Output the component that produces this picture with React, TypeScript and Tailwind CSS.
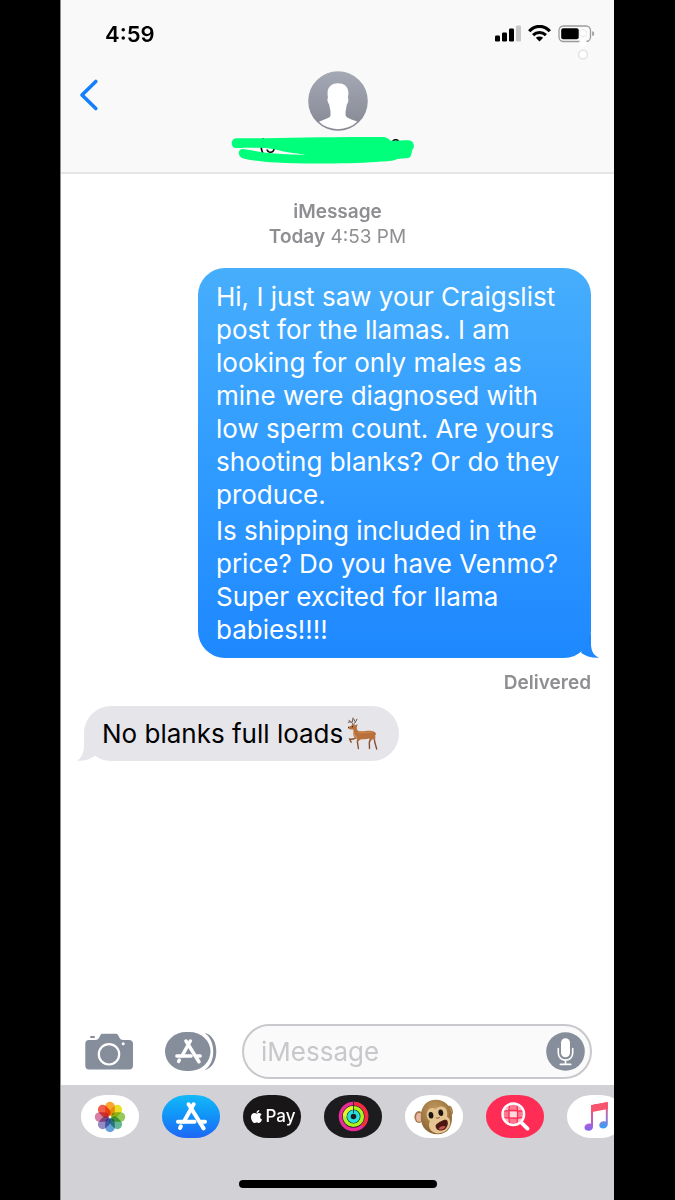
import React from "react";
import { FaApple } from "react-icons/fa";

function Signal() {
  return (
    <svg width="26" height="17" viewBox="0 0 26 17" role="img" aria-label="Cellular signal">
      <rect x="0" y="10.5" width="5" height="6" rx="1.3" />
      <rect x="7" y="7.5" width="5" height="9" rx="1.3" />
      <rect x="14" y="3.5" width="5" height="13" rx="1.3" />
      <rect x="21" y="0.5" width="5" height="16" rx="1.3" fill="#c8c8c8" />
    </svg>
  );
}

function Wifi() {
  return (
    <svg width="23" height="17" viewBox="0 0 23 17" role="img" aria-label="Wi-Fi">
      <g fill="none" stroke="#000" strokeWidth="3.2">
        <path d="M1.2 6.2C7-.2 16-.2 21.8 6.2" />
        <path d="M5.1 10.1C8.8 6.6 14.2 6.6 17.9 10.1" />
      </g>
      <path d="M7.8 12.8C10 11 13 11 15.2 12.8L11.5 16.6Z" />
    </svg>
  );
}

function Battery() {
  return (
    <svg width="37" height="36" viewBox="0 0 37 36" role="img" aria-label="Battery">
      <rect x="1" y="1" width="31.5" height="15.5" rx="4.5" fill="#fbfbfb" stroke="#9b9b9b" strokeWidth="1.3" />
      <rect x="3.2" y="3.3" width="17.5" height="11" rx="2" />
      <path d="M34.2 6.2C36.8 6.6 36.8 10.6 34.2 11Z" fill="#9b9b9b" />
      <circle cx="25" cy="8" r="3.6" fill="#fff" stroke="#e9e9e9" />
      <circle cx="25" cy="18" r="3.8" fill="#fff" />
      <circle cx="25" cy="29.5" r="4.4" fill="#fff" stroke="#e6e6e6" strokeWidth="1.8" />
    </svg>
  );
}

function Avatar() {
  return (
    <svg width="60" height="60" viewBox="0 0 60 60" aria-hidden="true">
      <defs>
        <linearGradient id="avatar" x1="0" y1="0" x2="0" y2="1">
          <stop offset="0" stopColor="#a5a9b6" />
          <stop offset="1" stopColor="#858892" />
        </linearGradient>
        <clipPath id="avatarClip">
          <circle cx="30" cy="30" r="28.2" />
        </clipPath>
      </defs>
      <circle cx="30" cy="30" r="29.8" fill="url(#avatar)" />
      <path
        clipPath="url(#avatarClip)"
        fill="#fff"
        d="M30 12.2C24.5 12.2 20 15 19.6 21C19.4 24 19.9 26 20 27C18.8 27.6 19.5 31.5 21.2 33.5C21.7 37 22.3 38.8 22.5 40V44.5C21.6 47.8 13 49 9 52L12 60H48L52 52C47 49 38.9 48 37.6 44.5V40C38 38.6 38.4 36.5 38.8 33.5C40.4 31.5 41 27.6 39.8 27C40.2 25 40.6 23 40.2 20C39.5 15 36 12.2 30 12.2Z"
      />
    </svg>
  );
}

function Scribble() {
  return (
    <svg className="absolute inset-0" width="184" height="30" viewBox="0 0 184 30" aria-hidden="true">
      <path
        fill="#00ff7a"
        d="M5 2.2C40 2.8 90 .8 151 1.1C156 1.2 158 3 159 4.5C167 5.3 174 3.5 179 4.6C183 5.5 184 11 181.5 13.5C180 16 181.5 19 178.5 21.5C175 23 170 21.8 165 23.5C160 25.5 152 25.3 145 26C120 27.5 75 28.5 45 26.5C32 25.5 20 24.5 11.5 22.2C6.5 20.5 6.5 12.8 12 13C22 14 28 16.5 40 17.3C52 18.2 65 19 78 18.6C70 18.2 62 17 57 16.2C49 15.4 43 12.2 34 12C23 11.6 14 12 5 12.1C-.8 11.8-.8 2.6 5 2.2Z"
      />
    </svg>
  );
}

function Camera() {
  return (
    <svg width="48" height="37" viewBox="0 0 48 37" aria-hidden="true">
      <rect x="5" y="3" width="5" height="2" rx="1" fill="#868e9b" />
      <path
        fill="#868e9b"
        d="M4 7H10C13 7 13.8 5.5 14.8 3.3C15.7 1.2 16.5.7 18.5.7H30C32 .7 32.8 1.2 33.7 3.3C34.7 5.5 35.5 7 38.5 7H44Q48 7 48 11V32.5Q48 36.5 44 36.5H4Q.3 36.5.3 32.5V11Q.3 7 4 7Z"
      />
      <circle cx="24" cy="21.3" r="10.2" fill="none" stroke="#fff" strokeWidth="2.2" />
      <circle cx="38.2" cy="10.7" r="1.5" fill="#fff" />
    </svg>
  );
}

function StoreGlyph({ width, height }: { width: number; height: number }) {
  return (
    <svg width={width} height={height} viewBox="0 0 31 29" aria-hidden="true">
      <g fill="none" stroke="#fff" strokeWidth="4" strokeLinecap="round">
        <path d="M17.6 2.3L8 19.5" />
        <path d="M12.6 2.3L27.6 26.4" />
        <path d="M2 19.7H18.5M25.5 19.7H29" />
        <path d="M4.9 24.3L4 26" />
      </g>
    </svg>
  );
}

function Drawer() {
  return (
    <span className="relative flex h-[39px] w-[52px] items-center">
      <svg className="absolute inset-0" width="52" height="39" viewBox="0 0 52 39" aria-hidden="true">
        <rect x="0" y="0" width="45.5" height="39" rx="21" ry="19.5" fill="#868e9b" />
        <path fill="#868e9b" d="M39.5.8C47 2.6 51.3 10 51.3 19.5S47 36.4 39.5 38.2C45.5 34 48.2 27.5 48.2 19.5S45.5 5 39.5.8Z" />
      </svg>
      <span className="relative flex w-[46px] justify-center">
        <StoreGlyph width={27} height={25} />
      </span>
    </span>
  );
}

function Mic() {
  return (
    <svg width="39" height="39" viewBox="0 0 39 39" aria-hidden="true">
      <circle cx="19.5" cy="19.5" r="19.3" fill="#868e9b" />
      <rect x="15" y="6.3" width="9" height="19" rx="4.5" fill="#fff" />
      <path d="M12.3 16.5V21C12.3 30.5 26.7 30.5 26.7 21V16.5M19.5 28V32.3M14.3 32.4H24.7" fill="none" stroke="#fff" strokeWidth="1.6" strokeLinecap="round" />
    </svg>
  );
}

function Deer() {
  return (
    <svg width="32" height="33" viewBox="0 0 32 33" role="img" aria-label="deer">
      <path d="M6 8.5C5.6 5.5 4 4.5 2 3.5M5.3 5L6 1M6.6 8C7 5.5 9.3 5 10 2.2M8.3 5L6.8 2M4 4.8L1.3 5.3" fill="none" stroke="#6d5649" strokeWidth="1" strokeLinecap="round" />
      <path d="M10 20C8 21 7 22.5 4 22.3L2.5 22L4.2 25.2M12.5 20L10.3 24L11.4 31.5M24 20L22.3 25.5L22.5 31.5M27 18.5L27.7 25L29.7 32" fill="none" stroke="#875232" strokeWidth="1.4" strokeLinejoin="round" strokeLinecap="round" />
      <path d="M9 8L10.8 7L9.8 10C9.5 12 10 13.6 12 14.2C17 14.8 21 13.2 25 14C27.8 14.4 29 15.6 29.2 18L28 17.8C28.5 20 28.6 22 27.5 23.5C26.5 22 25.6 21.6 24.5 23L23.5 25L22.5 21.5C18.5 22.5 15.5 22 13.5 22.5L10.6 25L9.8 21.8C6 20.3 5.8 17 6.2 12.6L3.5 12.4L1 11.4L1.4 10.1L5 8.2Z" fill="#b8713c" />
      <path d="M11 15C16 17 20 14.6 26 15" fill="none" stroke="#c98349" strokeWidth="1.4" />
      <path d="M6.3 12.5C6.5 16 7 18.5 9.5 20.5" fill="none" stroke="#d9a473" strokeWidth="1" />
      <circle cx="5.4" cy="9.7" r=".6" fill="#21130c" />
      <path d="M1 10.4L2 10.2" stroke="#2b1a12" />
    </svg>
  );
}

const petals = ["#f99a1c", "#e8dc12", "#8ac449", "#55b088", "#5596d8", "#8b7dbd", "#d0719c", "#f04f3a"];

function Photos() {
  return (
    <svg width="32" height="32" viewBox="-16 -16 32 32" aria-hidden="true">
      {petals.map((color, i) => (
        <rect key={color} x="-4.8" y="-15.2" width="9.6" height="14" rx="4.8" fill={color} fillOpacity=".9" transform={`rotate(${i * 45})`} className="mix-blend-multiply" />
      ))}
    </svg>
  );
}

function Rings() {
  return (
    <svg width="31" height="31" viewBox="0 0 31 31" aria-hidden="true">
      <g fill="none" strokeWidth="3.6">
        <circle cx="15.5" cy="15.5" r="13" stroke="#e92b9a" />
        <path d="M15.5 2.5A13 13 0 0 1 24.7 24.7" stroke="#f62b3b" />
        <circle cx="15.5" cy="15.5" r="8.8" stroke="#aaf51f" />
        <path d="M15.5 6.7A8.8 8.8 0 0 0 6.7 15.5" stroke="#e4f52a" />
        <circle cx="15.5" cy="15.5" r="4.6" stroke="#26dfe0" />
      </g>
      <path d="M15.5 1V12" stroke="#1c1b1e" strokeWidth=".8" />
    </svg>
  );
}

function Monkey() {
  return (
    <svg width="40" height="36" viewBox="0 0 40 36" aria-hidden="true">
      <defs>
        <radialGradient id="fur" cx=".45" cy=".3" r=".75">
          <stop offset="0" stopColor="#c39a5f" />
          <stop offset="1" stopColor="#85602f" />
        </radialGradient>
      </defs>
      <ellipse cx="5" cy="18" rx="4.6" ry="6" fill="#a27a45" />
      <ellipse cx="5.2" cy="18.4" rx="3.1" ry="4.4" fill="#eab5a4" />
      <ellipse cx="35.5" cy="11.5" rx="3.2" ry="4.8" fill="#a27a45" transform="rotate(-15 35.5 11.5)" />
      <ellipse cx="35.6" cy="11.6" rx="1.8" ry="3.2" fill="#dca592" transform="rotate(-15 35.6 11.6)" />
      <path d="M21 .8C31 .3 37.5 8 38 17C38.4 27 34 34.8 24.5 35.2C14 35.6 6.8 29 6.8 18C6.8 8 12 1.2 21 .8Z" fill="url(#fur)" />
      <path d="M21.5 10C17 7 12 10.5 12.8 17C13 19.5 14.5 21 16 22C13 27 16.5 34.2 24 34.4C32 34.5 37.5 28 36 21.5C35.6 19.6 34.2 18.5 33 17.8C34.5 12 31.5 7 26.8 7.5C24 7.8 22.8 9 21.5 10Z" fill="#e5c491" />
      <ellipse cx="17" cy="16.3" rx="2.4" ry="3.3" fill="#1d1714" transform="rotate(-8 17 16.3)" />
      <ellipse cx="26.8" cy="13.8" rx="2.4" ry="3.3" fill="#1d1714" transform="rotate(-8 26.8 13.8)" />
      <path d="M22.4 18.8Q23.8 19.8 25.4 18.3" fill="none" stroke="#9a6c42" strokeWidth="1.1" strokeLinecap="round" />
      <path d="M22.2 25.5C24.5 23.5 29 20.6 32 20.8C34.6 21.6 34.4 26.5 31.7 29.4C28.8 32.4 24.2 32 22.4 29.4C21.4 27.9 21.3 26.5 22.2 25.5Z" fill="#4a1712" />
      <path d="M24.5 29.8C25.5 27.8 29.5 26.1 31.8 27.6C29.8 31 26.2 31.3 24.5 29.8Z" fill="#c4574e" />
    </svg>
  );
}

function Images() {
  return (
    <svg width="29" height="29" viewBox="0 0 29 29" aria-hidden="true">
      <circle cx="12.3" cy="12.3" r="10.8" fill="#ff7890" />
      <path d="M8.5 9.2H16V15.5H8.5Z" fill="#ffd9e0" />
      <path d="M2 9.2H8.5V3.5ZM16 3.5V9.2H22ZM8.5 15.5V22L3 16ZM16 15.5H22L16 22Z" fill="#ffb9c6" />
      <path d="M8.5 2.5Q7.3 12 8.5 22M16 2.5Q17.2 12 16 22M2.5 9Q12 8 22 9M2.5 15.7Q12 16.7 22 15.7" fill="none" stroke="#ff2d55" strokeWidth="1.3" />
      <circle cx="12.3" cy="12.3" r="10.8" fill="none" stroke="#fff" strokeWidth="2.4" />
      <path d="M20.6 20.8L26.5 26.6" stroke="#fff" strokeWidth="3.8" strokeLinecap="round" />
    </svg>
  );
}

function Music() {
  return (
    <svg width="25" height="30" viewBox="0 0 25 30" aria-hidden="true">
      <defs>
        <linearGradient id="noteLeft" x1="0" y1="0" x2="0" y2="1">
          <stop offset=".15" stopColor="#f7526a" />
          <stop offset=".6" stopColor="#c15fc1" />
          <stop offset="1" stopColor="#7f65f6" />
        </linearGradient>
        <linearGradient id="noteRight" x1="0" y1="0" x2="0" y2="1">
          <stop offset=".1" stopColor="#f7526a" />
          <stop offset=".6" stopColor="#9d78d2" />
          <stop offset="1" stopColor="#2fa0f8" />
        </linearGradient>
      </defs>
      <path d="M7 3.2V21.5C3.5 21 .5 22.6.5 25.6C.5 30 9 30.2 9 24.5V9L12 8.3V2Z" fill="url(#noteLeft)" />
      <path d="M23.8 0V21.8C23.8 28 15.3 27.6 15.3 23.2C15.3 19.8 19 18.7 21.8 19.4V6L11 8V2.4Z" fill="url(#noteRight)" />
      <path d="M7 3.2L23.8 0V7L7 10.2Z" fill="#f7546d" />
    </svg>
  );
}

const pill = "flex h-[43px] w-[58px] shrink-0 items-center justify-center rounded-[25px/21px]";

export default function App() {
  return (
    <div className="flex min-h-screen bg-black pr-[61px] pl-[60px] font-['Inter','Liberation_Sans',sans-serif] text-black">
      <div className="flex min-w-0 flex-1 flex-col border-l border-[#8e8e8e] bg-white">
        <header className="border-b-2 border-[#e5e5e7] bg-[#f9f9f9]">
          <div className="flex h-[62px] items-start justify-between pt-[25px] pr-[19px] pl-11">
            <time className="text-[22px] leading-[18px] font-semibold">4:59</time>
            <div className="flex items-start gap-[7px]">
              <Signal />
              <Wifi />
              <Battery />
            </div>
          </div>
          <div className="grid grid-cols-[1fr_auto_1fr] items-start pb-1.5">
            <button type="button" aria-label="Back" className="ml-[18px] justify-self-start pt-4">
              <svg width="20" height="34" viewBox="0 0 20 34" aria-hidden="true">
                <path d="M16.8 3.5L3 17L16.8 30.5" fill="none" stroke="#147efb" strokeWidth="3.6" strokeLinecap="round" strokeLinejoin="round" />
              </svg>
            </button>
            <button type="button" aria-label="Contact" className="col-start-2 flex w-[214px] flex-col items-center gap-[5px] pt-[9px]">
              <Avatar />
              <span className="relative h-[30px] w-[184px] self-start">
                <span className="flex justify-between pt-px pr-[13px] pl-7 text-[18px] leading-5">
                  <span>(5</span>
                  <span>9</span>
                </span>
                <Scribble />
              </span>
            </button>
          </div>
        </header>

        <main className="flex flex-1 flex-col px-[23px] pt-[25px] pb-6">
          <div className="text-center text-[19px] leading-[25px] text-[#8e8e93]">
            <p className="font-semibold">iMessage</p>
            <p>
              <span className="font-semibold">Today</span> 4:53 PM
            </p>
          </div>

          <div className="relative mt-[19px] w-[393px] max-w-full self-end rounded-[27px] bg-linear-to-b from-[#47aefc] via-[#309bff] to-[#1e88ff] pt-3 pr-3 pb-3 pl-[18px] text-[26px] leading-[33px] text-white">
            <p>
              Hi, I just saw your Craigslist post for the llamas. I am looking for only males as mine were diagnosed with low sperm count. Are yours shooting blanks? Or do they produce.
            </p>
            <p className="mt-[3px]">Is shipping included in the price? Do you have Venmo? Super excited for llama babies!!!!</p>
            <svg className="absolute -right-2 bottom-0" width="22" height="24" viewBox="0 0 22 24" aria-hidden="true">
              <path d="M13 0H14V11C14.5 18 17 21.5 22 23.8C14 24 8 22 4 18.8Z" fill="#1e88ff" />
            </svg>
          </div>
          <p className="mt-3 self-end text-[19px] leading-[25px] font-semibold text-[#8e8e93]">Delivered</p>

          <div className="relative mt-[11px] flex h-[55px] items-center gap-1 self-start rounded-[27px] bg-[#e5e5ea] pr-5 pl-[18px] text-[26px] leading-[33px]">
            <p>No blanks full loads</p>
            <Deer />
            <svg className="absolute bottom-0 -left-[7px]" width="22" height="24" viewBox="0 0 22 24" aria-hidden="true">
              <path d="M8 0H7V10C6.5 17 4 21.5 0 23.8C8 24 14 22 18 18.8Z" fill="#e5e5ea" />
            </svg>
          </div>
        </main>

        <form className="flex items-center pr-[22px] pb-1.5 pl-6" onSubmit={(e) => e.preventDefault()}>
          <button type="button" aria-label="Camera" className="mr-8">
            <Camera />
          </button>
          <button type="button" aria-label="App drawer" className="mr-[25px]">
            <Drawer />
          </button>
          <div className="flex h-[55px] min-w-0 flex-1 items-center rounded-full border-2 border-[#c8c8cd] bg-[#fafafa] pr-[5px] pl-[17px]">
            <input aria-label="iMessage" placeholder="iMessage" className="min-w-0 flex-1 bg-transparent text-[26px] outline-none placeholder:text-[#c7c7cc]" />
            <button type="button" aria-label="Record audio">
              <Mic />
            </button>
          </div>
        </form>

        <footer className="bg-[#d1d1d6] pt-2.5 pb-3">
          <nav aria-label="iMessage apps" className="flex gap-[23px] overflow-hidden pl-5">
            <button type="button" aria-label="Photos" className={`${pill} bg-white`}>
              <Photos />
            </button>
            <button type="button" aria-label="App Store" className={`${pill} bg-linear-to-b from-[#16b9f8] to-[#1f66f5]`}>
              <StoreGlyph width={31} height={29} />
            </button>
            <button type="button" className={`${pill} bg-[#181617] text-[17px] font-medium text-white`}>
              <FaApple className="mr-0.5 size-[15px]" aria-hidden="true" />
              Pay
            </button>
            <button type="button" aria-label="Activity" className={`${pill} bg-[#1c1b1e]`}>
              <Rings />
            </button>
            <button type="button" aria-label="Animoji" className={`${pill} bg-white`}>
              <Monkey />
            </button>
            <button type="button" aria-label="Images" className={`${pill} bg-[#ff2d55]`}>
              <Images />
            </button>
            <button type="button" aria-label="Music" className={`${pill} bg-white`}>
              <Music />
            </button>
          </nav>
          <div className="mx-auto mt-[42px] h-2 w-[198px] rounded-full bg-black" />
        </footer>
      </div>
    </div>
  );
}
